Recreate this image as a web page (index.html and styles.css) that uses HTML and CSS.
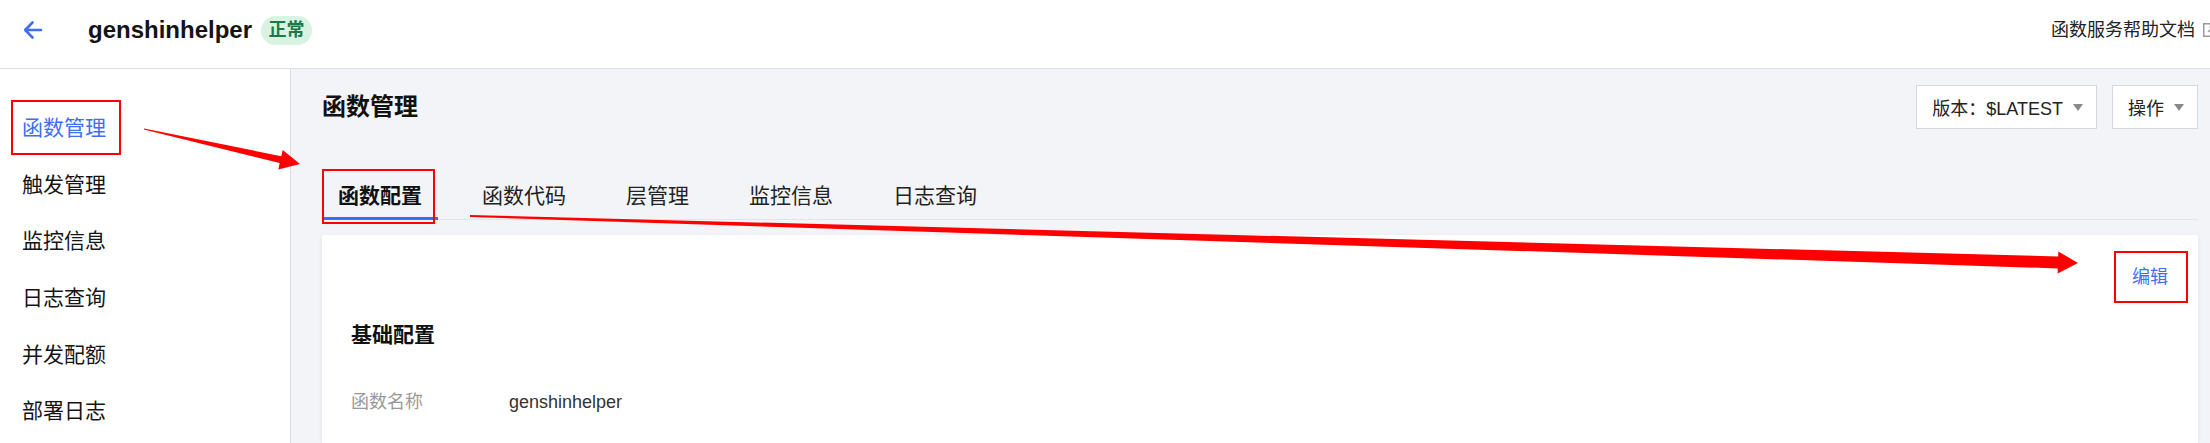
FILE: index.html
```html
<!DOCTYPE html>
<html lang="zh-CN">
<head>
<meta charset="utf-8">
<title>genshinhelper - 函数管理</title>
<link rel="stylesheet" href="styles.css">
</head>
<body>
<div class="app">
  <header class="topbar">
    <div class="topbar-left">
      <svg class="back" viewBox="0 0 20 20" width="20" height="20" aria-hidden="true">
        <path d="M2.5 10 H18 M9.5 2.5 L2.2 10 L9.5 17.5" fill="none" stroke="currentColor" stroke-width="2.6" stroke-linecap="round" stroke-linejoin="round"/>
      </svg>
      <span class="fn-name">genshinhelper</span>
      <span class="badge">正常</span>
    </div>
    <div class="topbar-right">
      <span class="help">函数服务帮助文档</span>
      <svg class="ext" viewBox="0 0 14 14" width="14" height="14" aria-hidden="true">
        <rect x="0.75" y="0.75" width="12.5" height="12.5" fill="none" stroke="#9a9a9a" stroke-width="1.5"/>
        <path d="M5 9 L10 4 M6.5 4 H10 V7.5" fill="none" stroke="#9a9a9a" stroke-width="1.4"/>
      </svg>
    </div>
  </header>
  <div class="layout">
    <nav class="sidebar">
      <a class="nav-item active">函数管理</a>
      <a class="nav-item">触发管理</a>
      <a class="nav-item">监控信息</a>
      <a class="nav-item">日志查询</a>
      <a class="nav-item">并发配额</a>
      <a class="nav-item">部署日志</a>
    </nav>
    <main class="main">
      <div class="title-row">
        <h1 class="page-title">函数管理</h1>
        <div class="actions">
          <button class="dropdown">版本：$LATEST<span class="caret"></span></button>
          <button class="dropdown">操作<span class="caret"></span></button>
        </div>
      </div>
      <div class="tabs">
        <span class="tab active">函数配置</span>
        <span class="tab">函数代码</span>
        <span class="tab">层管理</span>
        <span class="tab">监控信息</span>
        <span class="tab">日志查询</span>
      </div>
      <section class="card">
        <div class="card-head"><a class="edit">编辑</a></div>
        <h2 class="section-title">基础配置</h2>
        <div class="field">
          <span class="label">函数名称</span>
          <span class="value">genshinhelper</span>
        </div>
      </section>
    </main>
  </div>
  <svg class="annotations" viewBox="0 0 2210 443" width="2210" height="443" aria-hidden="true">
    <g fill="none" stroke="#ff0000" stroke-width="2">
      <rect x="12" y="101" width="108" height="53"/>
      <rect x="323" y="170" width="111" height="53"/>
      <rect x="2115" y="252" width="72" height="50"/>
    </g>
    <polygon fill="#ff0000" points="143.9,129.5 279.7,163 278.3,169.4 300,164 282.7,149.9 281.3,156.2 144.1,128.5"/>
    <polygon fill="#ff0000" points="470,215 2058.2,256.4 2058.3,251.4 2078,263 2057.7,273.4 2057.8,268.4 470,217"/>
  </svg>
</div>
</body>
</html>
```

FILE: styles.css
```css
* {
  box-sizing: border-box;
  margin: 0;
  padding: 0;
}

html,
body {
  width: 100%;
  height: 100%;
  overflow: hidden;
}

body {
  font-family: "Liberation Sans", "Noto Sans CJK SC", sans-serif;
  color: #222;
  background: #fff;
}

.app {
  position: relative;
  width: 2210px;
  height: 443px;
  overflow: hidden;
  display: flex;
  flex-direction: column;
}

/* top bar */
.topbar {
  flex: none;
  height: 69px;
  display: flex;
  align-items: center;
  justify-content: space-between;
  padding: 0 0 8px 23px;
  border-bottom: 1px solid #dcdfe6;
  background: #fff;
}

.topbar-left {
  display: flex;
  align-items: center;
}

.back {
  display: block;
  color: #3f6ef5;
  margin-right: 45px;
}

.fn-name {
  font-size: 24px;
  font-weight: 700;
  color: #141414;
  line-height: 28px;
}

.badge {
  margin-left: 9px;
  height: 29px;
  padding: 0 7.5px;
  border-radius: 14.5px;
  background: #d9f3e3;
  color: #1d7a48;
  font-size: 18px;
  font-weight: 700;
  line-height: 29px;
}

.topbar-right {
  display: flex;
  align-items: center;
  gap: 8px;
  margin-right: -7px;
}

.help {
  font-size: 18px;
  line-height: 24px;
  color: #222;
}

.ext {
  display: block;
  flex: none;
}

/* body */
.layout {
  flex: 1;
  display: flex;
  min-height: 0;
}

.sidebar {
  flex: none;
  width: 291px;
  display: flex;
  flex-direction: column;
  padding-top: 31px;
  border-right: 1px solid #d9dde7;
  background: #fff;
}

.nav-item {
  height: 56.7px;
  line-height: 56.7px;
  padding-left: 22px;
  font-size: 21px;
  color: #151515;
}

.nav-item.active {
  color: #3d6ef5;
}

.main {
  flex: 1;
  min-width: 0;
  display: flex;
  flex-direction: column;
  padding: 16px 12px 0 31px;
  background: #f3f4f8;
}

.title-row {
  height: 44px;
  display: flex;
  align-items: center;
  justify-content: space-between;
}

.page-title {
  font-size: 24px;
  font-weight: 700;
  line-height: 44px;
  color: #111;
}

.actions {
  display: flex;
  gap: 15px;
}

.dropdown {
  height: 44px;
  display: inline-flex;
  align-items: center;
  padding: 0 13px 0 15px;
  border: 1px solid #d3d7df;
  background: #fff;
  font-family: inherit;
  font-size: 18px;
  color: #222;
}

.caret {
  margin-left: 10px;
  width: 0;
  height: 0;
  border-left: 5.5px solid transparent;
  border-right: 5.5px solid transparent;
  border-top: 7px solid #8a8a8a;
}

.tabs {
  margin-top: 45px;
  display: flex;
  gap: 28px;
  border-bottom: 1px solid #e1e4ea;
}

.tab {
  height: 46px;
  padding: 0 16px;
  margin-bottom: -1px;
  line-height: 43px;
  font-size: 21px;
  color: #222;
  border-bottom: 3px solid transparent;
}

.tab.active {
  font-weight: 700;
  color: #111;
  border-bottom-color: #3a6df2;
}

.card {
  flex: 1;
  margin-top: 15px;
  padding: 30px 30px 0 29px;
  background: #fff;
  box-shadow: 0 1px 4px rgba(0, 0, 0, 0.08);
}

.card-head {
  display: flex;
  justify-content: flex-end;
  line-height: 24px;
}

.edit {
  font-size: 18px;
  color: #3d6ef5;
}

.section-title {
  margin-top: 31px;
  font-size: 21px;
  font-weight: 700;
  line-height: 30px;
  color: #111;
}

.field {
  margin-top: 40px;
  display: flex;
  font-size: 18px;
  line-height: 24px;
}

.label {
  width: 158px;
  color: #999;
}

.value {
  color: #333;
}

/* red annotation overlay drawn on top of the screenshot */
.annotations {
  position: absolute;
  left: 0;
  top: 0;
  pointer-events: none;
}
```
